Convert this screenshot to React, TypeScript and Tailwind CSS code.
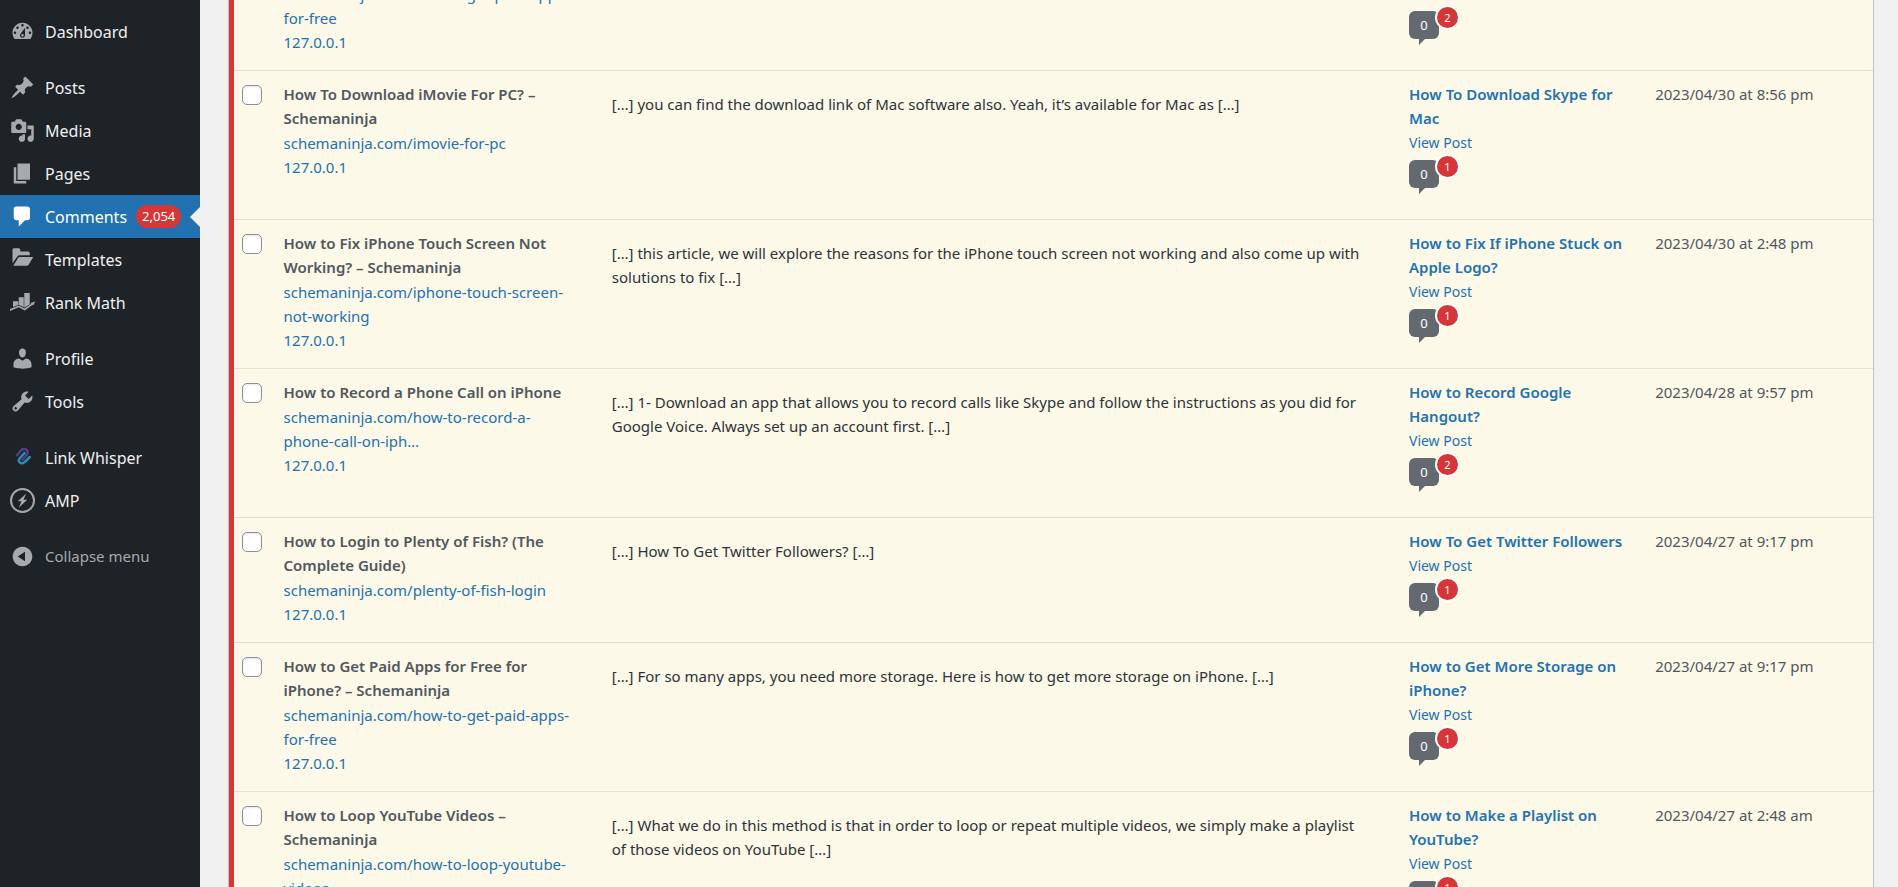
import type { ReactNode } from "react";
import clsx from "clsx";

type Comment = {
  id: number;
  author: string;
  url: string;
  text: string;
  post: string;
  pending: number;
  date: string;
};

const comments: Comment[] = [
  {
    id: 1,
    author: "How to Get Paid Apps for Free for iPhone? – Schemaninja",
    url: "schemaninja.com/how-to-get-paid-apps-for-free",
    text: "",
    post: "How to Get Paid Apps for Free for iPhone?",
    pending: 2,
    date: "",
  },
  {
    id: 2,
    author: "How To Download iMovie For PC? – Schemaninja",
    url: "schemaninja.com/imovie-for-pc",
    text: "[…] you can find the download link of Mac software also. Yeah, it’s available for Mac as […]",
    post: "How To Download Skype for Mac",
    pending: 1,
    date: "2023/04/30 at 8:56 pm",
  },
  {
    id: 3,
    author: "How to Fix iPhone Touch Screen Not Working? – Schemaninja",
    url: "schemaninja.com/iphone-touch-screen-not-working",
    text: "[…] this article, we will explore the reasons for the iPhone touch screen not working and also come up with solutions to fix […]",
    post: "How to Fix If iPhone Stuck on Apple Logo?",
    pending: 1,
    date: "2023/04/30 at 2:48 pm",
  },
  {
    id: 4,
    author: "How to Record a Phone Call on iPhone",
    url: "schemaninja.com/how-to-record-a-phone-call-on-iph…",
    text: "[…] 1- Download an app that allows you to record calls like Skype and follow the instructions as you did for Google Voice. Always set up an account first. […]",
    post: "How to Record Google Hangout?",
    pending: 2,
    date: "2023/04/28 at 9:57 pm",
  },
  {
    id: 5,
    author: "How to Login to Plenty of Fish? (The Complete Guide)",
    url: "schemaninja.com/plenty-of-fish-login",
    text: "[…] How To Get Twitter Followers? […]",
    post: "How To Get Twitter Followers",
    pending: 1,
    date: "2023/04/27 at 9:17 pm",
  },
  {
    id: 6,
    author: "How to Get Paid Apps for Free for iPhone? – Schemaninja",
    url: "schemaninja.com/how-to-get-paid-apps-for-free",
    text: "[…] For so many apps, you need more storage. Here is how to get more storage on iPhone. […]",
    post: "How to Get More Storage on iPhone?",
    pending: 1,
    date: "2023/04/27 at 9:17 pm",
  },
  {
    id: 7,
    author: "How to Loop YouTube Videos – Schemaninja",
    url: "schemaninja.com/how-to-loop-youtube-videos",
    text: "[…] What we do in this method is that in order to loop or repeat multiple videos, we simply make a playlist of those videos on YouTube […]",
    post: "How to Make a Playlist on YouTube?",
    pending: 1,
    date: "2023/04/27 at 2:48 am",
  },
];

function Icon({ d, children }: { d?: string; children?: ReactNode }) {
  return (
    <svg viewBox="0 0 20 20" className="size-[25px] shrink-0" fill="currentColor" aria-hidden="true">
      {d && <path fillRule="evenodd" d={d} />}
      {children}
    </svg>
  );
}

const icons = {
  dashboard: (
    <Icon d="M3.76 16h12.48c1.1-1.37 1.76-3.11 1.76-5 0-4.42-3.58-8-8-8s-8 3.58-8 8c0 1.89.66 3.63 1.76 5zM10 4c.55 0 1 .45 1 1s-.45 1-1 1-1-.45-1-1 .45-1 1-1zM6 6c.55 0 1 .45 1 1s-.45 1-1 1-1-.45-1-1 .45-1 1-1zm8 0c.55 0 1 .45 1 1s-.45 1-1 1-1-.45-1-1 .45-1 1-1zm-5.37 5.55L12 7v6c0 1.1-.9 2-2 2s-2-.9-2-2c0-.57.24-1.08.63-1.45zM4 10c.55 0 1 .45 1 1s-.45 1-1 1-1-.45-1-1 .45-1 1-1zm12 0c.55 0 1 .45 1 1s-.45 1-1 1-1-.45-1-1 .45-1 1-1zm-5 3c0-.55-.45-1-1-1s-1 .45-1 1 .45 1 1 1 1-.45 1-1z" />
  ),
  posts: (
    <Icon d="M10.44 3.02l1.82-1.82 6.36 6.35-1.83 1.82c-1.05-.68-2.48-.57-3.41.36l-.75.75c-.92.93-1.04 2.35-.35 3.41l-1.83 1.82-2.41-2.41-2.8 2.79c-.42.42-3.38 2.71-3.8 2.29s1.86-3.39 2.28-3.81l2.79-2.79L4.1 9.36l1.83-1.82c1.05.69 2.48.57 3.4-.36l.75-.75c.93-.92 1.05-2.35.36-3.41z" />
  ),
  media: (
    <Icon d="M13 11V4c0-.55-.45-1-1-1h-1.67L9 1H5L3.67 3H2c-.55 0-1 .45-1 1v7c0 .55.45 1 1 1h10c.55 0 1-.45 1-1zM7 4.5c1.38 0 2.5 1.12 2.5 2.5S8.38 9.5 7 9.5 4.5 8.38 4.5 7 5.62 4.5 7 4.5zM14 6h5v10.5c0 1.38-1.12 2.5-2.5 2.5S14 17.88 14 16.5s1.12-2.5 2.5-2.5c.17 0 .34.02.5.05V9h-3V6zm-4 8.05V13h2v3.5c0 1.38-1.12 2.5-2.5 2.5S7 17.88 7 16.5 8.12 14 9.5 14c.17 0 .34.02.5.05z" />
  ),
  pages: <Icon d="M6 15V2h10v13H6zm-1 1h8v2H3V5h2v11z" />,
  comments: (
    <Icon d="M5 2h9c1.1 0 2 .9 2 2v7c0 1.1-.9 2-2 2h-2l-5 5v-5H5c-1.1 0-2-.9-2-2V4c0-1.1.9-2 2-2z" />
  ),
  templates: (
    <Icon d="M2 2.2Q2 1 3.2 1H7Q8.2 1 8.2 2.2V3.6H14.6Q15.8 3.6 15.8 4.8V6.6H7.8Q6.6 6.6 5.9 7.6L2 13zM7.8 8H18.6L14.9 14.2Q14.3 15 13.2 15H2.6L6.4 8.8Q6.9 8 7.8 8z" />
  ),
  rankMath: (
    <Icon d="M2.4 9h4.2v3L2.4 13.6zM7 5.8h4v8L7 11.8zM11.4 2.4h4.4v9l-4.4 2.8zM0 15.2L7 12.4 11.6 14.8 17 11 16.4 10.4 20.2 9.2 18.6 12.4 18 11.8 11.8 16.4 7 13.8 0 16.8z" />
  ),
  profile: (
    <Icon d="M10 9.25c-2.27 0-2.73-3.44-2.73-3.44C7 4.02 7.82 2 9.97 2c2.16 0 2.98 2.02 2.71 3.81 0 0-.41 3.44-2.68 3.44zm0 2.57L12.72 10c2.39 0 4.52 2.33 4.52 4.53v2.49s-3.65 1.13-7.24 1.13c-3.65 0-7.24-1.13-7.24-1.13v-2.49c0-2.25 1.94-4.48 4.47-4.48z" />
  ),
  tools: (
    <Icon d="M16.68 9.77c-1.34 1.34-3.3 1.67-4.95.99l-5.41 6.52c-.99.99-2.59.99-3.58 0s-.99-2.59 0-3.57l6.52-5.42c-.68-1.65-.35-3.61.99-4.95 1.28-1.28 3.12-1.62 4.72-1.06l-2.89 2.89 2.82 2.82 2.86-2.87c.53 1.58.18 3.39-1.08 4.65zM3.81 16.21c.4.39 1.04.39 1.43 0 .4-.4.4-1.04 0-1.43-.39-.4-1.03-.4-1.43 0-.39.39-.39 1.03 0 1.43z" />
  ),
  linkWhisper: (
    <Icon>
      <g fill="none" strokeWidth="2" strokeLinecap="round" strokeLinejoin="round">
        <path stroke="#4f3f86" d="M5.6 8.2L9 4.2Q10.2 3 12.4 3.4 15.2 4.6 13.8 7.2L10 11.8" />
        <path stroke="#2b8fb3" d="M11.6 6.4L7.8 10.6Q6 13 8.4 14.4 10.6 15 12 13.4L15.8 9.6" />
      </g>
    </Icon>
  ),
  amp: (
    <Icon>
      <circle cx="10" cy="10" r="9.2" fill="none" stroke="currentColor" strokeWidth="1.6" />
      <path d="M13 4.4L6.2 10.6H9.2L7 15.8 13.8 9.4H10.8z" />
    </Icon>
  ),
  collapse: (
    <Icon d="M10 2.16c4.33 0 7.84 3.51 7.84 7.84s-3.51 7.84-7.84 7.84S2.16 14.33 2.16 10 5.67 2.16 10 2.16zm2 11.72V6.12L6.18 9.97z" />
  ),
};

const menu = [
  [{ label: "Dashboard", icon: icons.dashboard }],
  [
    { label: "Posts", icon: icons.posts },
    { label: "Media", icon: icons.media },
    { label: "Pages", icon: icons.pages },
    { label: "Comments", icon: icons.comments, count: "2,054" },
    { label: "Templates", icon: icons.templates },
    { label: "Rank Math", icon: icons.rankMath },
  ],
  [
    { label: "Profile", icon: icons.profile },
    { label: "Tools", icon: icons.tools },
  ],
  [
    { label: "Link Whisper", icon: icons.linkWhisper },
    { label: "AMP", icon: icons.amp },
  ],
];

function Sidebar() {
  return (
    <nav aria-label="Main menu" className="flex w-[200px] shrink-0 flex-col gap-[13px] bg-[#1d2327] pt-[10px]">
      {menu.map((group, i) => (
        <ul key={i}>
          {group.map((item) => {
            const active = "count" in item;
            return (
              <li key={item.label}>
                <a
                  href="#"
                  className={clsx(
                    "relative flex h-[43px] items-center gap-[10px] pl-[10px] text-base",
                    active ? "bg-[#2271b1] text-white" : "text-[#f0f0f1]"
                  )}
                >
                  <span className={active ? "text-white" : "text-[#a7aaad]"}>{item.icon}</span>
                  {item.label}
                  {active && (
                    <>
                      <span className="-ml-px rounded-full bg-[#d63638] px-[6px] text-[13px] leading-[23px]">
                        {item.count}
                      </span>
                      <span className="absolute right-0 border-y-[10px] border-r-[10px] border-y-transparent border-r-[#f0f0f1]" />
                    </>
                  )}
                </a>
              </li>
            );
          })}
        </ul>
      ))}
      <button type="button" className="flex h-[43px] items-center gap-[10px] pl-[10px] text-[15px] text-[#a7aaad]">
        {icons.collapse}
        Collapse menu
      </button>
    </nav>
  );
}

function CommentCount({ pending }: { pending: number }) {
  return (
    <div className="flex h-12 pt-[5px]">
      <a href="#" aria-label="0 approved comments" className="h-[34px] w-[30px] text-[#646970]">
        <span className="block h-7 rounded-md bg-[#646970] text-center text-[13px] leading-7 text-white">0</span>
        <svg viewBox="0 0 6 6" className="ml-[10px] size-[6px]" fill="currentColor" aria-hidden="true">
          <path d="M0 0h6L0 6z" />
        </svg>
      </a>
      <a
        href="#"
        className="-mt-[6px] -ml-1 size-[25px] rounded-full border-2 border-white bg-[#d63638] text-center text-[11px] leading-[21px] text-white"
      >
        {pending}
      </a>
    </div>
  );
}

function CommentRow({ comment }: { comment: Comment }) {
  return (
    <tr className="border-b border-[#e2dfd0] bg-[#fcf9e8] align-top">
      <td className="border-l-[5px] border-[#d63638] pt-[14px] pl-2">
        <input
          type="checkbox"
          aria-label={`Select comment by ${comment.author}`}
          className="block size-5 appearance-none rounded-[5px] border border-[#8c8f94] bg-white shadow-[inset_0_1px_2px_rgba(0,0,0,0.1)]"
        />
      </td>
      <td className="pt-[11px] pr-5 pb-4 pl-3">
        <strong className="block font-semibold">{comment.author}</strong>
        <a href="#" className="mt-px block text-[#2271b1]">
          {comment.url}
        </a>
        <a href="#" className="block text-[#2271b1]">
          127.0.0.1
        </a>
      </td>
      <td className="pt-[21px] pr-8 pl-3 text-[#2c3338]">
        <p>{comment.text}</p>
      </td>
      <td className="px-3 pt-[11px] pb-4 text-[#2271b1]">
        <a href="#" className="block font-semibold">
          {comment.post}
        </a>
        <a href="#" className="mt-px block text-sm leading-6">
          View Post
        </a>
        <CommentCount pending={comment.pending} />
      </td>
      <td className="px-3 pt-[11px]">{comment.date}</td>
    </tr>
  );
}

export default function App() {
  return (
    <div className="flex h-screen overflow-hidden bg-[#f0f0f1] font-['Noto_Sans',sans-serif]">
      <Sidebar />
      <main className="min-w-0 flex-1 overflow-hidden pr-6 pl-7">
        {/* list is scrolled part way into its first comment */}
        <div className="-mt-[78px] border-x border-[#c3c4c7]">
          <table className="w-full table-fixed border-collapse text-[15px] leading-6 text-[#50575e]">
            <colgroup>
              <col className="w-10" />
              <col className="w-[20%]" />
              <col />
              <col className="w-[15%]" />
              <col className="w-[14%]" />
            </colgroup>
            <tbody>
              {comments.map((comment) => (
                <CommentRow key={comment.id} comment={comment} />
              ))}
            </tbody>
          </table>
        </div>
      </main>
    </div>
  );
}
